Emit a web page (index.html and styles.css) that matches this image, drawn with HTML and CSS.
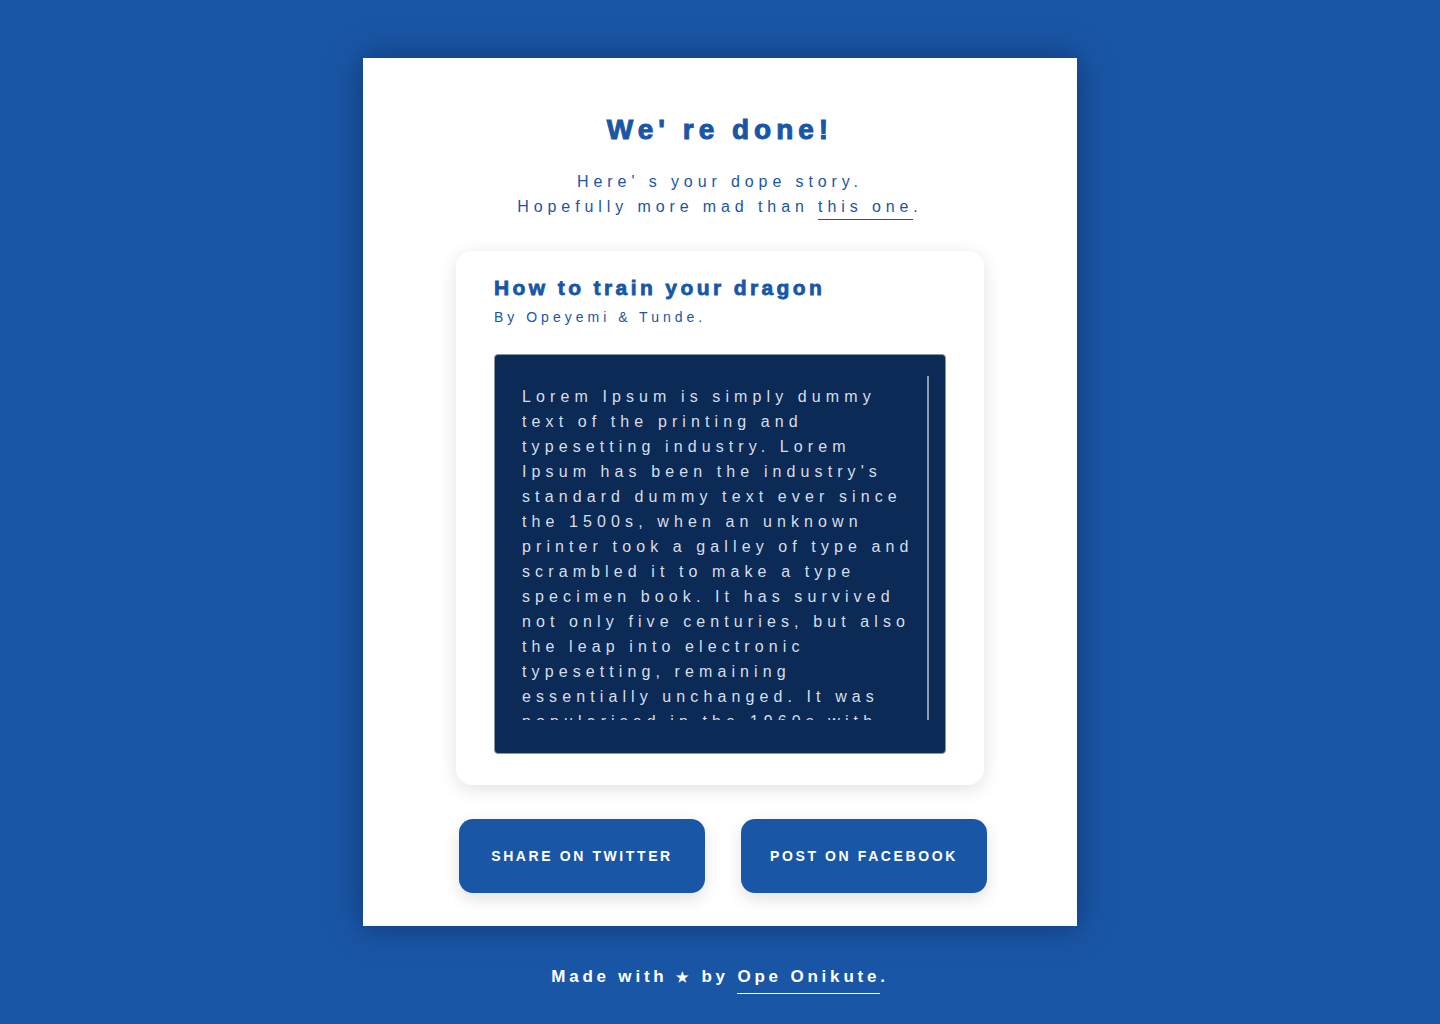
FILE: index.html
```html
<!DOCTYPE html>
<html lang="en">
<head>
<meta charset="utf-8">
<title>We're done!</title>
<link rel="stylesheet" href="styles.css">
</head>
<body>
<main class="sheet">
  <h1 class="title">We' re done!</h1>
  <p class="lead">Here' s your dope story.<br>Hopefully more mad than <a class="link" href="#">this one</a>.</p>
  <section class="story">
    <h2 class="story-title">How to train your dragon</h2>
    <p class="byline">By Opeyemi &amp; Tunde.</p>
    <div class="box">
      <div class="scroll">
        <p class="story-text">Lorem Ipsum is simply dummy text of the printing and typesetting industry. Lorem Ipsum has been the industry's standard dummy text ever since the 1500s, when an unknown printer took a galley of type and scrambled it to make a type specimen book. It has survived not only five centuries, but also the leap into electronic typesetting, remaining essentially unchanged. It was popularised in the 1960s with the release of Letraset sheets containing Lorem Ipsum passages.</p>
      </div>
    </div>
  </section>
  <div class="actions">
    <button class="btn">SHARE ON TWITTER</button>
    <button class="btn">POST ON FACEBOOK</button>
  </div>
</main>
<footer class="footer">Made with <span class="star">★</span> by <a class="footer-link" href="#">Ope Onikute</a>.</footer>
</body>
</html>
```
FILE: styles.css
```css
* { box-sizing: border-box; }
html, body { margin: 0; padding: 0; }
body {
  background: #1a56a6;
  font-family: "Liberation Sans", Arial, sans-serif;
  color: #1a56a6;
  min-height: 1024px;
}
.sheet {
  width: 714px;
  margin: 58px auto 0;
  background: #fff;
  padding: 55px 0 33px;
  box-shadow: 0 0 30px rgba(5, 30, 70, 0.55);
  display: flex;
  flex-direction: column;
  align-items: center;
}
.title {
  margin: 0;
  font-size: 28px;
  line-height: 34px;
  font-weight: 900;
  letter-spacing: 5px;
  text-align: center;
  -webkit-text-stroke: 1px #1a56a6;
}
.lead {
  margin: 22px 0 0;
  font-size: 16px;
  line-height: 25px;
  letter-spacing: 4.9px;
  text-align: center;
}
.link {
  color: #1a56a6;
  text-decoration: none;
  border-bottom: 1px solid #1a56a6;
  padding-bottom: 4px;
}
.story {
  margin-top: 32px;
  width: 528px;
  background: #fff;
  border-radius: 16px;
  padding: 25px 38px 31px;
  box-shadow: 0 4px 18px rgba(0, 0, 0, 0.12);
}
.story-title {
  margin: 0;
  font-size: 21px;
  line-height: 24px;
  font-weight: 900;
  letter-spacing: 3.4px;
  -webkit-text-stroke: 0.8px #1a56a6;
}
.byline {
  margin: 8px 0 0;
  font-size: 14px;
  line-height: 18px;
  letter-spacing: 4px;
}
.box {
  margin-top: 28px;
  height: 400px;
  background: #0b2a55;
  border: 1px solid #8d96a3;
  border-radius: 4px;
  padding: 21px 16px 0 27px;
}
.scroll {
  height: 344px;
  overflow: hidden;
  border-right: 2px solid #8e9db4;
  padding-right: 8px;
}
.story-text {
  margin: 0;
  padding-top: 8px;
  width: 396px;
  color: #d7dee9;
  font-size: 16px;
  line-height: 25px;
  letter-spacing: 5.1px;
}
.actions {
  margin-top: 34px;
  display: flex;
  gap: 36px;
  padding-left: 6px;
}
.btn {
  width: 246px;
  height: 74px;
  border: none;
  border-radius: 14px;
  background: #1a56a6;
  color: #fff;
  font-family: "Liberation Sans", Arial, sans-serif;
  font-weight: 700;
  font-size: 14px;
  letter-spacing: 2.6px;
  box-shadow: 0 6px 16px rgba(0, 0, 0, 0.12);
  cursor: pointer;
}
.footer {
  margin-top: 39px;
  text-align: center;
  color: #fff;
  font-weight: 700;
  font-size: 17px;
  line-height: 24px;
  letter-spacing: 3.8px;
}
.star { font-size: 14px; }
.footer-link {
  color: #fff;
  text-decoration: none;
  border-bottom: 1px solid #fff;
  padding-bottom: 7px;
}
```
